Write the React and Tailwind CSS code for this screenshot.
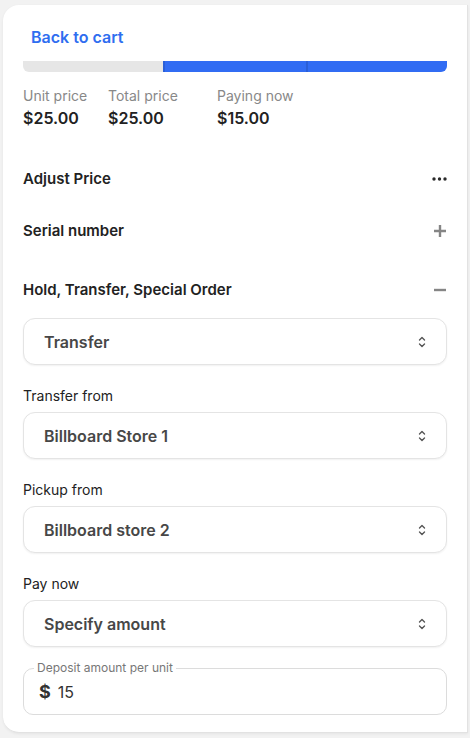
import React from "react";

function UpDown() {
  return (
    <svg width="8" height="12" viewBox="0 0 8 12" fill="none" stroke="#555" strokeWidth="1.4" strokeLinecap="round" strokeLinejoin="round">
      <path d="M1.5 4 L4 1.5 L6.5 4" />
      <path d="M1.5 8 L4 10.5 L6.5 8" />
    </svg>
  );
}

function Select({ value }) {
  return (
    <div className="h-[47px] rounded-[12px] border border-[#e4e4e4] bg-white shadow-[0_1px_2px_rgba(0,0,0,0.06)] flex items-center justify-between pl-[20px] pr-[20px]">
      <span className="text-[16px] font-semibold text-[#474747]">{value}</span>
      <UpDown />
    </div>
  );
}

function Label({ children }) {
  return <div className="mt-[21px] h-5 leading-5 text-[14px] text-[#222]">{children}</div>;
}

export default function App() {
  return (
    <div className="min-h-[738px] bg-[#f2f2f2] pt-[5px] pl-[3px]" style={{ fontFamily: "Inter, 'Noto Sans', sans-serif" }}>
      <div className="w-[465px] h-[728px] bg-white rounded-l-[16px] border-r border-b border-[#e2e2e2] shadow-[0_1px_3px_rgba(0,0,0,0.06)] pl-5 pr-[20px] pt-[22px]">
        <div className="pl-2 h-5 leading-5 text-[16px] font-semibold text-[#2f6ef0]">Back to cart</div>

        <div className="mt-[14px] h-[11px] flex rounded-b-[6px] overflow-hidden">
          <div className="w-[140px] bg-[#e6e6e6]" />
          <div className="w-[143px] bg-[#316cf3] border-l-2 border-[#2a5fd8]" />
          <div className="flex-1 bg-[#316cf3] border-l-2 border-[#2a5fd8]" />
        </div>

        <div className="mt-[14px] flex">
          <div className="w-[85px]">
            <div className="h-5 leading-5 text-[14px] text-[#888]">Unit price</div>
            <div className="h-6 leading-6 text-[16px] font-semibold text-[#222]">$25.00</div>
          </div>
          <div className="w-[109px]">
            <div className="h-5 leading-5 text-[14px] text-[#888]">Total price</div>
            <div className="h-6 leading-6 text-[16px] font-semibold text-[#222]">$25.00</div>
          </div>
          <div>
            <div className="h-5 leading-5 text-[14px] text-[#888]">Paying now</div>
            <div className="h-6 leading-6 text-[16px] font-semibold text-[#222]">$15.00</div>
          </div>
        </div>

        <div className="mt-[29px] h-10 flex items-center justify-between">
          <span className="text-[15px] font-semibold text-[#222]">Adjust Price</span>
          <svg width="15" height="4" viewBox="0 0 15 4" fill="#2a2a2a">
            <circle cx="2" cy="2" r="1.7" />
            <circle cx="7.5" cy="2" r="1.7" />
            <circle cx="13" cy="2" r="1.7" />
          </svg>
        </div>

        <div className="mt-3 h-10 flex items-center justify-between">
          <span className="text-[15px] font-semibold text-[#222]">Serial number</span>
          <svg width="14" height="14" viewBox="0 0 14 14" stroke="#858585" strokeWidth="2.4">
            <path d="M7 1 V13 M1 7 H13" />
          </svg>
        </div>

        <div className="mt-[19px] h-10 flex items-center justify-between">
          <span className="text-[15px] font-semibold text-[#222]">Hold, Transfer, Special Order</span>
          <svg width="14" height="14" viewBox="0 0 14 14" stroke="#858585" strokeWidth="2.4">
            <path d="M1 7 H13" />
          </svg>
        </div>

        <div className="mt-[8px]">
          <Select value="Transfer" />
        </div>

        <Label>Transfer from</Label>
        <div className="mt-[6px]">
          <Select value="Billboard Store 1" />
        </div>

        <Label>Pickup from</Label>
        <div className="mt-[6px]">
          <Select value="Billboard store 2" />
        </div>

        <Label>Pay now</Label>
        <div className="mt-[6px]">
          <Select value="Specify amount" />
        </div>

        <div className="mt-[21px] relative h-[47px] rounded-[10px] border border-[#dcdcdc] flex items-center pl-[15px]">
          <span className="absolute left-[10px] top-[-9px] bg-white px-[3px] text-[12px] leading-4 text-[#777]">Deposit amount per unit</span>
          <span className="text-[18px] font-bold text-[#333] mr-[7px]">$</span>
          <span className="text-[16px] text-[#333]">15</span>
        </div>
      </div>
    </div>
  );
}
